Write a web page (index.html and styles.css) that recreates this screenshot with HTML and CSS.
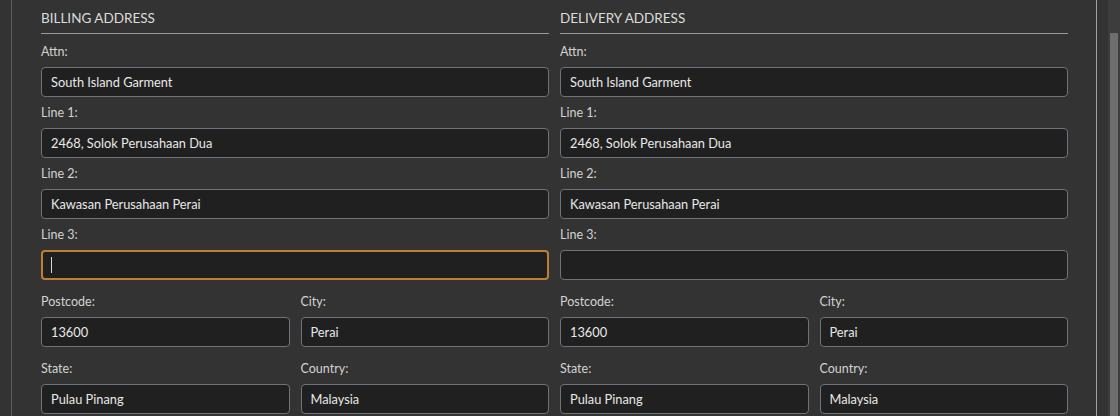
FILE: index.html
```html
<!DOCTYPE html>
<html>
<head>
<meta charset="utf-8">
<link rel="stylesheet" href="styles.css">
</head>
<body>
<div class="page">
  <div class="panel">
    <section class="col">
      <h2 class="title">BILLING ADDRESS</h2>
      <div class="field"><label>Attn:</label><input class="box" value="South Island Garment"></div>
      <div class="field"><label>Line 1:</label><input class="box" value="2468, Solok Perusahaan Dua"></div>
      <div class="field"><label>Line 2:</label><input class="box" value="Kawasan Perusahaan Perai"></div>
      <div class="field"><label>Line 3:</label><div class="focus-wrap"><input class="box focused" value=""><span class="caret"></span></div></div>
      <div class="pair">
        <div class="field"><label>Postcode:</label><input class="box" value="13600"></div>
        <div class="field"><label>City:</label><input class="box" value="Perai"></div>
      </div>
      <div class="pair">
        <div class="field"><label>State:</label><input class="box" value="Pulau Pinang"></div>
        <div class="field"><label>Country:</label><input class="box" value="Malaysia"></div>
      </div>
    </section>
    <section class="col">
      <h2 class="title">DELIVERY ADDRESS</h2>
      <div class="field"><label>Attn:</label><input class="box" value="South Island Garment"></div>
      <div class="field"><label>Line 1:</label><input class="box" value="2468, Solok Perusahaan Dua"></div>
      <div class="field"><label>Line 2:</label><input class="box" value="Kawasan Perusahaan Perai"></div>
      <div class="field"><label>Line 3:</label><input class="box" value=""></div>
      <div class="pair">
        <div class="field"><label>Postcode:</label><input class="box" value="13600"></div>
        <div class="field"><label>City:</label><input class="box" value="Perai"></div>
      </div>
      <div class="pair">
        <div class="field"><label>State:</label><input class="box" value="Pulau Pinang"></div>
        <div class="field"><label>Country:</label><input class="box" value="Malaysia"></div>
      </div>
    </section>
  </div>
  <div class="scrollbar"><div class="thumb"></div></div>
</div>
</body>
</html>
```
FILE: styles.css
```css
* { box-sizing: border-box; }
html, body {
  margin: 0;
  padding: 0;
  background: #333333;
  height: 416px;
  overflow: hidden;
  font-family: "Lato", "Noto Sans", sans-serif;
}
.page {
  display: flex;
  height: 416px;
  padding-left: 11px;
}
.panel {
  width: 1086px;
  border-left: 1px solid #5c5c5c;
  border-right: 1px solid #a0a0a0;
  padding: 0 28px 0 29px;
  display: grid;
  grid-template-columns: 1fr 1fr;
  column-gap: 11px;
  align-content: start;
}
.scrollbar {
  margin-left: 11px;
  width: 12px;
  background: #3d3d3d;
  padding: 33px 2px 0 2px;
}
.thumb {
  height: 420px;
  background: #6e6e6e;
}
.col {
  display: flex;
  flex-direction: column;
}
.title {
  margin: 0;
  padding-top: 9px;
  font-size: 13.5px;
  font-weight: normal;
  line-height: 18px;
  color: #dcdcdc;
  border-bottom: 1px solid #9a9a9a;
  padding-bottom: 6px;
  height: 34px;
  margin-bottom: 10px;
}
.field {
  display: flex;
  flex-direction: column;
}
.field label {
  font-size: 12.5px;
  line-height: 16px;
  color: #d2d2d2;
  margin-bottom: 7px;
}
.box {
  display: block;
  width: 100%;
  height: 30px;
  background: #202020;
  border: 1px solid #6e727a;
  border-radius: 4px;
  padding: 0 9px;
  font-family: "Lato", "Noto Sans", sans-serif;
  font-size: 12.8px;
  color: #e8e8e8;
  margin: 0 0 8px 0;
  outline: none;
}
.focus-wrap {
  position: relative;
}
.box.focused {
  border: 2px solid #bf7f33;
  padding: 0 8px;
}
.caret {
  position: absolute;
  left: 10px;
  top: 7px;
  width: 1px;
  height: 16px;
  background: #d8d8d8;
}
.pair {
  display: grid;
  grid-template-columns: 1fr 1fr;
  column-gap: 11px;
  margin-top: 6px;
}
```
